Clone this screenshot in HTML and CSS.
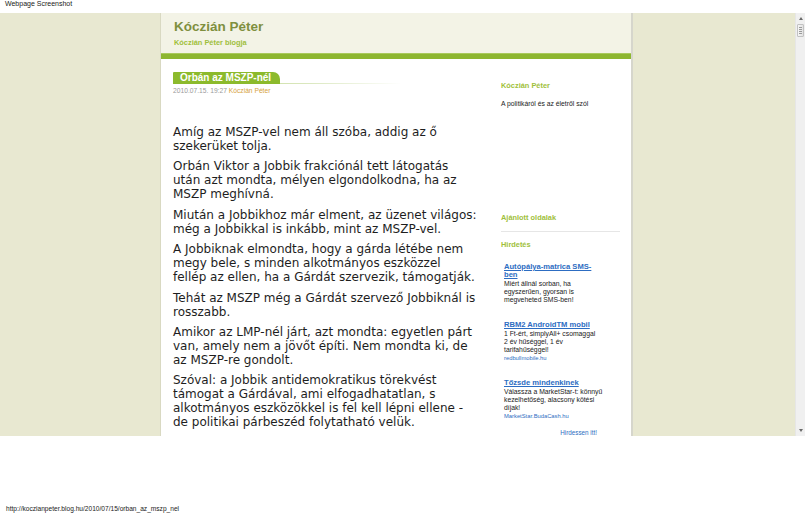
FILE: index.html
```html
<!DOCTYPE html>
<html lang="hu">
<head>
<meta charset="utf-8">
<title>Kóczián Péter: Orbán az MSZP-nél</title>
<link rel="stylesheet" href="styles.css">
</head>
<body>
<div class="cap">Webpage Screenshot</div>
<div class="viewport">
  <div class="page">
    <div class="col">
      <div class="head">
        <div class="site-title">Kóczián Péter</div>
        <div class="site-sub">Kóczián Péter blogja</div>
      </div>
      <div class="bar"></div>
      <div class="content">
        <div class="main">
          <div class="ptitle"><span class="tab">Orbán az MSZP-nél</span></div>
          <div class="date">2010.07.15. 19:27 <span class="author">Kóczián Péter</span></div>
          <div class="post">
            <p class="first">Amíg az MSZP-vel nem áll szóba, addig az ő szekerüket tolja.</p>
            <p>Orbán Viktor a Jobbik frakciónál tett látogatás után azt mondta, mélyen elgondolkodna, ha az MSZP meghívná.</p>
            <p>Miután a Jobbikhoz már elment, az üzenet világos: még a Jobbikkal is inkább, mint az MSZP-vel.</p>
            <p>A Jobbiknak elmondta, hogy a gárda létébe nem megy bele, s minden alkotmányos eszközzel<br>fellép az ellen, ha a Gárdát szervezik, támogatják.</p>
            <p>Tehát az MSZP még a Gárdát szervező Jobbiknál is rosszabb.</p>
            <p>Amikor az LMP-nél járt, azt mondta: egyetlen párt van, amely nem a jövőt építi. Nem mondta ki, de az MSZP-re gondolt.</p>
            <p>Szóval: a Jobbik antidemokratikus törekvést támogat a Gárdával, ami elfogadhatatlan, s alkotmányos eszközökkel is fel kell lépni ellene - de politikai párbeszéd folytatható velük.</p>
            <p>Az MSZP-vel viszont semmilyen párbeszéd nem folytatható.</p>
          </div>
        </div>
        <div class="side">
          <div class="sh first-h">Kóczián Péter</div>
          <div class="stext">A politikáról és az életről szól</div>
          <div class="sh rec">Ajánlott oldalak</div>
          <div class="sh ads-h">Hirdetés</div>
          <div class="ads">
            <div class="ad">
              <a class="ad-t">Autópálya-matrica SMS-ben</a>
              <div class="ad-d">Miért állnál sorban, ha<br>egyszerűen, gyorsan is<br>megveheted SMS-ben!</div>
            </div>
            <div class="ad">
              <a class="ad-t">RBM2 AndroidTM mobil</a>
              <div class="ad-d">1 Ft-ért, simplyAll+ csomaggal<br>2 év hűséggel, 1 év<br>tarifahűséggel!</div>
              <div class="ad-u">redbullmobile.hu</div>
            </div>
            <div class="ad">
              <a class="ad-t">Tőzsde mindenkinek</a>
              <div class="ad-d">Válassza a MarketStar-t: könnyű<br>kezelhetőség, alacsony kötési<br>díjak!</div>
              <div class="ad-u">MarketStar.BudaCash.hu</div>
            </div>
          </div>
          <div class="ad-more">Hirdessen itt!</div>
        </div>
      </div>
    </div>
  </div>
  <div class="sbar">
    <div class="arr up"></div>
    <div class="thumb"><i></i><i></i><i></i><i></i></div>
    <div class="sp"></div>
    <div class="arr down"></div>
  </div>
</div>
<div class="status">http://koczianpeter.blog.hu/2010/07/15/orban_az_mszp_nel</div>
</body>
</html>
```
FILE: styles.css
```css
html, body {
  margin: 0;
  padding: 0;
  background: #ffffff;
}
body {
  width: 810px;
  height: 513px;
  overflow: hidden;
  font-family: "Liberation Sans", Arial, sans-serif;
  color: #222;
}
.cap {
  height: 13px;
  font-size: 7px;
  line-height: 8px;
  padding-left: 5px;
  color: #222;
}
.viewport {
  display: flex;
  width: 805px;
  height: 423px;
  overflow: hidden;
}
.page {
  flex: 1;
  background: #e8e8d1;
  overflow: hidden;
}
.col {
  box-sizing: border-box;
  width: 473px;
  margin-left: 160px;
  height: 100%;
  background: #ffffff;
  border-left: 1px solid #d9d9c2;
  border-right: 2px solid #d6d6cc;
}
.head {
  height: 40px;
  box-sizing: border-box;
  padding: 6px 13px 0;
  background: #f3f3e6;
}
.site-title {
  font-size: 13.5px;
  font-weight: bold;
  line-height: 16px;
  color: #7f8f3e;
}
.site-sub {
  margin-top: 3px;
  font-size: 7.4px;
  font-weight: bold;
  line-height: 9px;
  color: #9fbf3c;
}
.bar {
  height: 6px;
  background: #8db630;
  border-top: 1px solid #a9c95c;
  box-sizing: border-box;
}
.content {
  display: flex;
  padding: 0 12px;
  gap: 23px;
}
.main {
  width: 305px;
  flex: none;
}
.ptitle {
  display: flex;
  margin-top: 13px;
  height: 12px;
  background: linear-gradient(to right, #b8d37a 0%, #dbe8c0 45%, rgba(255,255,255,0) 75%) left bottom / 100% 1px no-repeat;
}
.tab {
  display: block;
  height: 12px;
  padding: 0 9px 0 7px;
  background: #8cba2c;
  border-radius: 1px 7px 0 0;
  color: #ffffff;
  font-size: 10px;
  font-weight: bold;
  line-height: 12px;
}
.date {
  margin-top: 3px;
  font-size: 6.7px;
  line-height: 8px;
  color: #9a9a9a;
}
.author {
  color: #d6a23c;
}
.post {
  font-family: "DejaVu Sans", sans-serif;
  font-size: 12px;
  line-height: 14px;
  color: #1e1e1e;
}
.post p {
  margin: 0 0 6.4px;
}
.post p.first {
  margin-top: 30px;
}
.side {
  width: 119px;
  flex: none;
}
.sh {
  font-size: 7.4px;
  font-weight: bold;
  line-height: 10px;
  color: #9fbf3c;
}
.first-h {
  margin-top: 22px;
}
.stext {
  margin-top: 8px;
  font-size: 6.8px;
  line-height: 9px;
  color: #222;
}
.rec {
  margin-top: 105px;
  padding-bottom: 8px;
  border-bottom: 1px solid #e6e6e6;
}
.ads-h {
  margin-top: 8px;
}
.ads {
  width: 97px;
  padding-left: 3px;
  margin-top: 13px;
}
.ad {
  margin-bottom: 17px;
}
.ad-t {
  display: block;
  width: 94px;
  font-size: 7.6px;
  font-weight: bold;
  line-height: 8px;
  color: #2d6dc2;
  text-decoration: underline;
}
.ad-d {
  margin-top: 1px;
  font-size: 6.8px;
  line-height: 8px;
  color: #222;
  white-space: nowrap;
}
.ad-u {
  font-size: 5.8px;
  line-height: 8px;
  color: #2d6dc2;
}
.ad-more {
  margin-top: -8px;
  padding-right: 23px;
  text-align: right;
  font-size: 6.3px;
  line-height: 8px;
  color: #2d6dc2;
}
.sbar {
  width: 10px;
  flex: none;
  display: flex;
  flex-direction: column;
  align-items: center;
  background: #f0f0f0;
  border-left: 1px solid #e6e6e6;
  box-sizing: border-box;
}
.arr {
  width: 0;
  height: 0;
  border-left: 2.5px solid transparent;
  border-right: 2.5px solid transparent;
  margin: 4px 0 4px;
}
.arr.up {
  border-bottom: 3px solid #6a6a6a;
}
.arr.down {
  border-top: 3px solid #6a6a6a;
}
.thumb {
  width: 7px;
  height: 13px;
  box-sizing: border-box;
  border: 1px solid #c2c2c2;
  border-radius: 1px;
  background: linear-gradient(to right, #f6f6f6, #e2e2e2);
  display: flex;
  flex-direction: column;
  align-items: center;
  justify-content: center;
  gap: 1px;
}
.thumb i {
  display: block;
  width: 3px;
  height: 1px;
  background: #9a9a9a;
}
.sp {
  flex: 1;
}
.status {
  margin-top: 69px;
  padding-left: 6px;
  font-size: 6.6px;
  line-height: 8px;
  color: #222;
}
```
